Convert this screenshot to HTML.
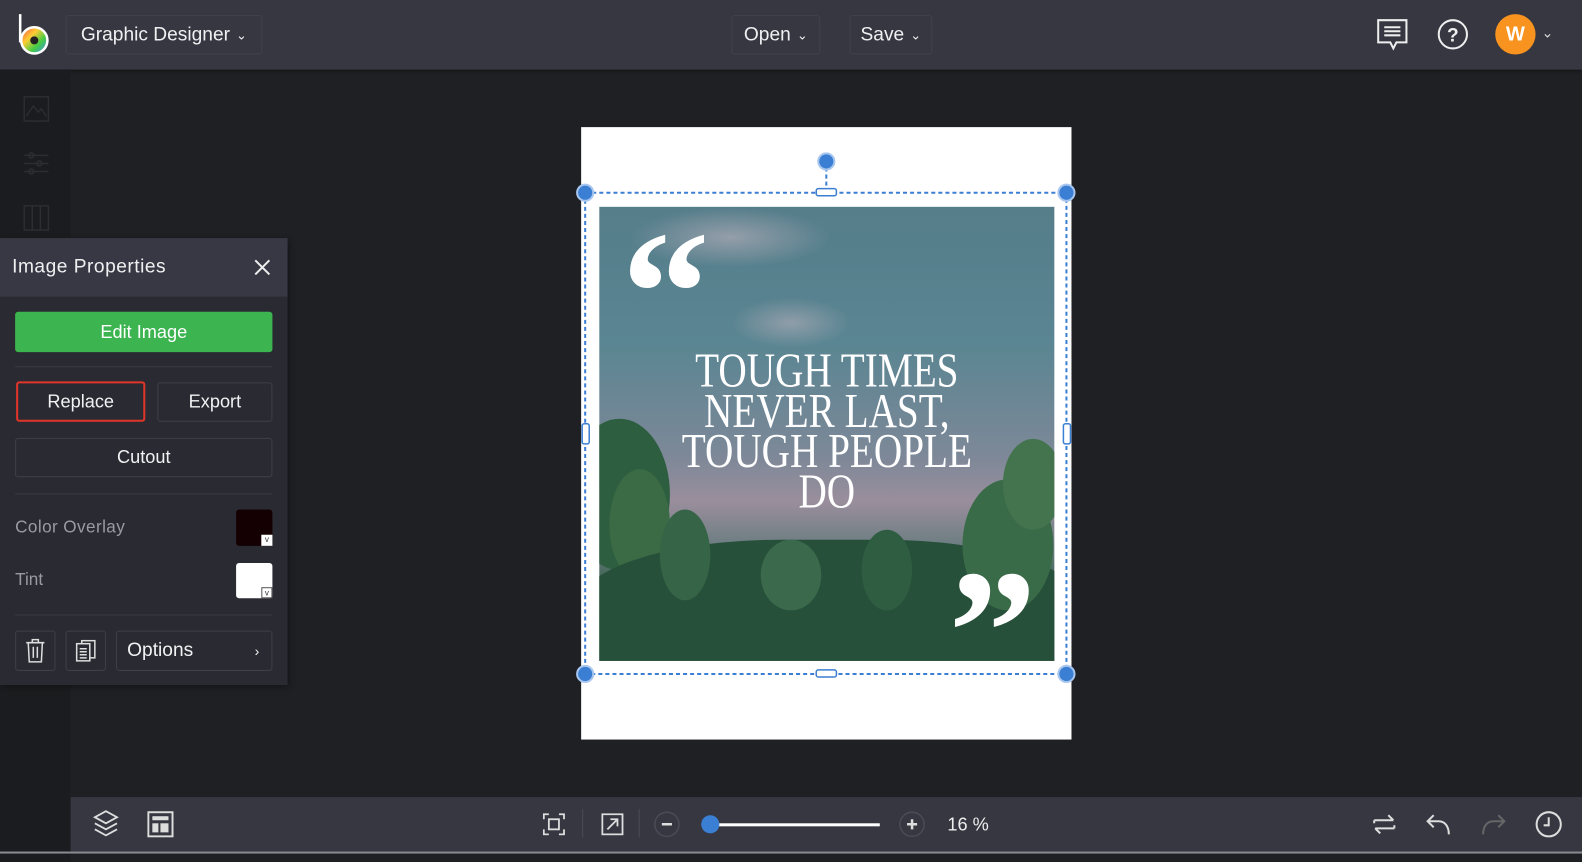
<!DOCTYPE html>
<html><head><meta charset="utf-8"><style>
*{box-sizing:border-box;margin:0;padding:0}
body{width:1582px;height:854px;overflow:hidden;background:#1f2024;font-family:"Liberation Sans",sans-serif;position:relative;color:#e8e8ea}
#wrap{position:absolute;left:0;top:0;width:1568px;height:846px;transform:scale(1.00893);transform-origin:0 0}
.top{position:absolute;left:0;top:0;width:1568px;height:69px;background:#363741;box-shadow:0 2px 4px rgba(0,0,0,.4)}
.btn{position:absolute;border:1px solid #41424c;border-radius:3px;color:#f0f0f2;font-size:19px;display:flex;align-items:center;justify-content:center}
.side{position:absolute;left:0;top:69px;width:70px;height:785px;background:#1b1c1f}
.panel{position:absolute;left:0;top:236px;width:285px;height:443px;background:#2a2b32;box-shadow:2px 2px 6px rgba(0,0,0,.4)}
.ph{height:58px;background:#373843;display:flex;align-items:center;padding-left:12px;font-size:19px;letter-spacing:.5px;color:#f0f0f2}
.pb{position:absolute;border:1px solid #3e3f48;border-radius:3px;color:#f2f2f4;font-size:18px;display:flex;align-items:center;justify-content:center}
.bottom{position:absolute;left:70px;top:790px;width:1498px;height:54px;background:#363741}
.ic{position:absolute}
</style></head><body><div id="wrap">
<div class="top">
  <svg class="ic" style="left:15px;top:12px" width="38" height="46" viewBox="0 0 38 46">
    <line x1="5" y1="2" x2="5" y2="30" stroke="#fff" stroke-width="2.5"/>
    <defs><linearGradient id="g" x1="0" y1="0" x2="1" y2="1"><stop offset="0" stop-color="#f44"/><stop offset=".35" stop-color="#fc3"/><stop offset=".65" stop-color="#4c4"/><stop offset="1" stop-color="#48f"/></linearGradient></defs>
    <circle cx="19" cy="28" r="13" fill="url(#g)" stroke="#fff" stroke-width="2.5"/>
    <circle cx="19" cy="28" r="4" fill="#222"/>
  </svg>
  <div class="btn" style="left:65px;top:15px;width:195px;height:39px">Graphic Designer <span style="font-size:13px;margin-left:6px">&#8964;</span></div>
  <div class="btn" style="left:725px;top:15px;width:88px;height:39px">Open <span style="font-size:13px;margin-left:6px">&#8964;</span></div>
  <div class="btn" style="left:842px;top:15px;width:82px;height:39px">Save <span style="font-size:13px;margin-left:6px">&#8964;</span></div>
  <svg class="ic" style="left:1364px;top:18px" width="34" height="34" viewBox="0 0 34 34" fill="none" stroke="#eee" stroke-width="2"><path d="M2 2h28v22H20l-3 6-3-6H2z"/><path d="M8 9h16M8 13h16M8 17h16"/></svg>
  <svg class="ic" style="left:1424px;top:18px" width="32" height="32" viewBox="0 0 32 32"><circle cx="16" cy="16" r="14" fill="none" stroke="#eee" stroke-width="2"/><text x="16" y="23" text-anchor="middle" font-size="19" font-weight="bold" fill="#eee" font-family="Liberation Sans">?</text></svg>
  <div style="position:absolute;left:1482px;top:14px;width:40px;height:40px;border-radius:50%;background:#f7931e;color:#fff;font-weight:bold;font-size:20px;display:flex;align-items:center;justify-content:center">W</div>
  <div style="position:absolute;left:1528px;top:24px;font-size:14px;color:#ddd">&#8964;</div>
</div>
<div class="side">
  <svg class="ic" style="left:23px;top:26px" width="26" height="26" viewBox="0 0 26 26" fill="none" stroke="#2c2d31" stroke-width="1.5"><rect x="1" y="1" width="24" height="24"/><path d="M3 20l7-10 5 6 3-3 5 7"/></svg>
  <svg class="ic" style="left:23px;top:80px" width="26" height="26" viewBox="0 0 26 26" fill="none" stroke="#2c2d31" stroke-width="1.5"><path d="M1 5h24M1 13h24M1 21h24"/><circle cx="8" cy="5" r="2.5"/><circle cx="16" cy="13" r="2.5"/><circle cx="8" cy="21" r="2.5"/></svg>
  <svg class="ic" style="left:23px;top:134px" width="26" height="26" viewBox="0 0 26 26" fill="none" stroke="#2c2d31" stroke-width="1.5"><rect x="1" y="1" width="24" height="24"/><path d="M9 1v24M17 1v24"/></svg>
</div>
<div class="panel">
  <div class="ph">Image Properties</div>
  <svg class="ic" style="left:251px;top:20px" width="18" height="18" viewBox="0 0 18 18" stroke="#eee" stroke-width="2"><path d="M2 2l14 14M16 2L2 16"/></svg>
  <div class="pb" style="left:15px;top:73px;width:255px;height:40px;background:#3cb450;border-color:#3cb450;color:#fff">Edit Image</div>
  <div style="position:absolute;left:15px;top:127px;width:255px;height:1px;background:#3a3b44"></div>
  <div class="pb" style="left:16px;top:142px;width:128px;height:40px;border:2px solid #e2352a">Replace</div>
  <div class="pb" style="left:156px;top:143px;width:114px;height:39px">Export</div>
  <div class="pb" style="left:15px;top:198px;width:255px;height:39px">Cutout</div>
  <div style="position:absolute;left:15px;top:253px;width:255px;height:1px;background:#3a3b44"></div>
  <div style="position:absolute;left:15px;top:277px;font-size:17px;color:#9a9ba2;letter-spacing:.4px">Color Overlay</div>
  <div style="position:absolute;left:234px;top:269px;width:36px;height:36px;background:#140003;border-radius:3px"><div style="position:absolute;right:0;bottom:0;width:11px;height:11px;background:#fff;font-size:8px;color:#333;text-align:center;line-height:10px">v</div></div>
  <div style="position:absolute;left:15px;top:329px;font-size:17px;color:#9a9ba2">Tint</div>
  <div style="position:absolute;left:234px;top:322px;width:36px;height:35px;background:#fff;border-radius:3px"><div style="position:absolute;right:0;bottom:0;width:11px;height:11px;border:1px solid #555;font-size:8px;color:#333;text-align:center;line-height:9px">v</div></div>
  <div style="position:absolute;left:15px;top:373px;width:255px;height:1px;background:#3a3b44"></div>
  <div class="pb" style="left:15px;top:389px;width:40px;height:40px"><svg width="20" height="24" viewBox="0 0 20 24" fill="none" stroke="#ddd" stroke-width="1.5"><path d="M1 4h18M7 4V1h6v3M3 4l1 19h12l1-19M8 8v11M12 8v11"/></svg></div>
  <div class="pb" style="left:65px;top:389px;width:40px;height:40px"><svg width="22" height="22" viewBox="0 0 22 22" fill="none" stroke="#ddd" stroke-width="1.5"><rect x="7" y="1" width="13" height="17"/><rect x="2" y="4" width="13" height="17" fill="#2a2b32"/><path d="M5 9h7M5 12h7M5 15h7M5 18h7"/></svg></div>
  <div class="pb" style="left:115px;top:389px;width:155px;height:40px;justify-content:space-between;padding:0 12px 0 10px;font-size:19px"><span>Options</span><span style="font-size:14px">&#8250;</span></div>
</div>
<!-- canvas -->
<div style="position:absolute;left:576px;top:126px;width:486px;height:607px;background:#fff"></div>
<div style="position:absolute;left:594px;top:205px;width:451px;height:450px;overflow:hidden;background:linear-gradient(180deg,#557d8a 0%,#5a8592 30%,#7d8898 55%,#9a8e9c 65%,#6a7d80 75%,#2f5a44 85%,#1f4a33 100%)">
  <div style="position:absolute;left:30px;top:0;width:200px;height:60px;background:radial-gradient(ellipse,rgba(210,190,200,.5),transparent 70%)"></div>
  <div style="position:absolute;left:130px;top:90px;width:120px;height:50px;background:radial-gradient(ellipse,rgba(210,190,200,.45),transparent 70%)"></div>
  <div style="position:absolute;left:-30px;top:210px;width:100px;height:150px;border-radius:50%;background:#2d5e3f"></div>
  <div style="position:absolute;left:10px;top:260px;width:60px;height:110px;border-radius:50%;background:#3b6b45"></div>
  <div style="position:absolute;left:-20px;top:330px;width:500px;height:160px;border-radius:40%;background:#27503a"></div>
  <div style="position:absolute;left:60px;top:300px;width:50px;height:90px;border-radius:50%;background:#356447"></div>
  <div style="position:absolute;left:160px;top:330px;width:60px;height:70px;border-radius:50%;background:#3a6a4b"></div>
  <div style="position:absolute;left:260px;top:320px;width:50px;height:80px;border-radius:50%;background:#2f5d42"></div>
  <div style="position:absolute;left:360px;top:270px;width:90px;height:130px;border-radius:50%;background:#3a6b48"></div>
  <div style="position:absolute;left:400px;top:230px;width:60px;height:90px;border-radius:50%;background:#44744e"></div>
  <div style="position:absolute;left:22px;top:-2px;font-family:'Liberation Serif',serif;font-size:175px;color:#fff;line-height:1;font-weight:bold">&#8220;</div>
  <div style="position:absolute;left:346px;top:334px;font-family:'Liberation Serif',serif;font-size:175px;color:#fff;line-height:1;font-weight:bold">&#8221;</div>
  <div style="position:absolute;left:0;top:143px;width:451px;text-align:center;font-family:'Liberation Serif',serif;font-size:48px;line-height:40px;color:#fff;transform:scaleX(.81)">TOUGH TIMES<br>NEVER LAST,<br>TOUGH PEOPLE<br>DO</div>
</div>
<svg class="ic" style="left:566px;top:148px" width="506" height="534" viewBox="0 0 506 534" fill="none">
  <rect x="14" y="43" width="477" height="477" stroke="#3b7fd4" stroke-width="2" stroke-dasharray="4 3"/>
  <path d="M253 18v22" stroke="#3b7fd4" stroke-width="2" stroke-dasharray="4 3"/>
  <g fill="#3b7fd4" stroke="#a9c7ee" stroke-width="2"><circle cx="253" cy="12" r="8"/><circle cx="14" cy="43" r="8"/><circle cx="491" cy="43" r="8"/><circle cx="14" cy="520" r="8"/><circle cx="491" cy="520" r="8"/></g>
  <g fill="#fff" stroke="#3b7fd4" stroke-width="1.5"><rect x="243" y="39" width="20" height="7" rx="2"/><rect x="243" y="516" width="20" height="7" rx="2"/><rect x="11" y="272" width="7" height="20" rx="2"/><rect x="488" y="272" width="7" height="20" rx="2"/></g>
</svg>
<div class="bottom">
  <svg class="ic" style="left:22px;top:12px" width="26" height="28" viewBox="0 0 26 28" fill="none" stroke="#ddd" stroke-width="1.8"><path d="M13 2l11 6-11 6L2 8z"/><path d="M2 14l11 6 11-6M2 20l11 6 11-6"/></svg>
  <svg class="ic" style="left:76px;top:14px" width="26" height="26" viewBox="0 0 26 26"><rect x="1" y="1" width="24" height="24" fill="none" stroke="#ddd" stroke-width="2"/><rect x="5" y="5" width="16" height="4" fill="#ddd"/><rect x="5" y="12" width="6" height="9" fill="#ddd"/><rect x="13" y="12" width="8" height="9" fill="#ddd"/></svg>
  <svg class="ic" style="left:468px;top:16px" width="22" height="22" viewBox="0 0 22 22" fill="none" stroke="#ddd" stroke-width="1.8"><path d="M1 6V1h5M16 1h5v5M21 16v5h-5M6 21H1v-5"/><rect x="6" y="6" width="10" height="10"/></svg>
  <div style="position:absolute;left:507px;top:12px;width:1px;height:28px;background:#4a4b55"></div>
  <svg class="ic" style="left:526px;top:16px" width="22" height="22" viewBox="0 0 22 22" fill="none" stroke="#ddd" stroke-width="1.8"><rect x="1" y="1" width="20" height="20"/><path d="M6 16L16 6M9 6h7v7"/></svg>
  <div style="position:absolute;left:563px;top:12px;width:1px;height:28px;background:#4a4b55"></div>
  <svg class="ic" style="left:578px;top:14px" width="26" height="26" viewBox="0 0 26 26"><circle cx="13" cy="13" r="12" fill="none" stroke="#4a4b55" stroke-width="1.5"/><path d="M8 13h10" stroke="#ddd" stroke-width="2.5"/></svg>
  <div style="position:absolute;left:634px;top:26px;width:168px;height:3px;background:#fff"></div>
  <div style="position:absolute;left:625px;top:18px;width:18px;height:18px;border-radius:50%;background:#3b7fd4"></div>
  <svg class="ic" style="left:821px;top:14px" width="26" height="26" viewBox="0 0 26 26"><circle cx="13" cy="13" r="12" fill="none" stroke="#4a4b55" stroke-width="1.5"/><path d="M8 13h10M13 8v10" stroke="#ddd" stroke-width="2.5"/></svg>
  <div style="position:absolute;left:869px;top:17px;font-size:18px;color:#eee">16 %</div>
  <svg class="ic" style="left:1290px;top:15px" width="24" height="24" viewBox="0 0 24 24" fill="none" stroke="#ddd" stroke-width="2"><path d="M2 8h19M16 3l5 5M2 8v3M22 16H3M8 21l-5-5M22 16v-3"/></svg>
  <svg class="ic" style="left:1343px;top:14px" width="26" height="26" viewBox="0 0 26 26" fill="none" stroke="#ddd" stroke-width="2"><path d="M3 10h10c6 0 10 5 10 13M8 4L2 10l6 6"/></svg>
  <svg class="ic" style="left:1397px;top:14px" width="26" height="26" viewBox="0 0 26 26" fill="none" stroke="#666" stroke-width="2"><path d="M23 10H13C7 10 3 15 3 23M18 4l6 6-6 6"/></svg>
  <svg class="ic" style="left:1451px;top:13px" width="28" height="28" viewBox="0 0 28 28" fill="none" stroke="#ddd" stroke-width="2"><circle cx="14" cy="14" r="12"/><path d="M14 7v8H9"/></svg>
</div>
<div style="position:absolute;left:0;top:844px;width:1568px;height:2px;background:#8a8b90"></div>
</div></body></html>
